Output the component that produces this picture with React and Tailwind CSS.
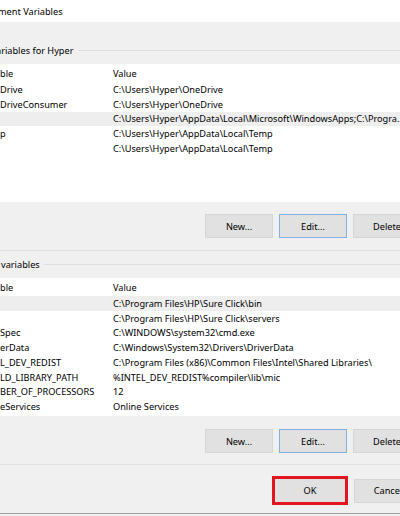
import React from "react";

const userRows = [
  { n: "Drive", v: "C:\\Users\\Hyper\\OneDrive" },
  { n: "DriveConsumer", v: "C:\\Users\\Hyper\\OneDrive" },
  { n: "", v: "C:\\Users\\Hyper\\AppData\\Local\\Microsoft\\WindowsApps;C:\\Progra...", sel: true },
  { n: "p", v: "C:\\Users\\Hyper\\AppData\\Local\\Temp" },
  { n: "", v: "C:\\Users\\Hyper\\AppData\\Local\\Temp" },
];

const sysRows = [
  { n: "", v: "C:\\Program Files\\HP\\Sure Click\\bin", sel: true },
  { n: "", v: "C:\\Program Files\\HP\\Sure Click\\servers" },
  { n: "Spec", v: "C:\\WINDOWS\\system32\\cmd.exe" },
  { n: "erData", v: "C:\\Windows\\System32\\Drivers\\DriverData" },
  { n: "L_DEV_REDIST", v: "C:\\Program Files (x86)\\Common Files\\Intel\\Shared Libraries\\" },
  { n: "LD_LIBRARY_PATH", v: "%INTEL_DEV_REDIST%compiler\\lib\\mic" },
  { n: "BER_OF_PROCESSORS", v: "12" },
  { n: "eServices", v: "Online Services" },
];

function List({ rows }) {
  return (
    <div className="h-[138px] bg-white overflow-hidden shrink-0">
      <div className="h-[18px] flex items-center whitespace-nowrap">
        <div className="w-[113px] shrink-0">ble</div>
        <div>Value</div>
      </div>
      {rows.map((r, i) => (
        <div
          key={i}
          className={
            "h-[14.75px] flex items-center whitespace-nowrap " +
            (r.sel ? "bg-[#eeeeee]" : "")
          }
        >
          <div className="w-[113px] shrink-0 overflow-hidden">{r.n}</div>
          <div className="overflow-hidden">{r.v}</div>
        </div>
      ))}
    </div>
  );
}

function Btn({ children, focus }) {
  return (
    <div
      className={
        "w-[68px] h-[24px] shrink-0 flex items-center justify-center bg-[#e1e1e1] border " +
        (focus ? "border-[#7fb0e0]" : "border-[#d6d6d6]")
      }
    >
      {children}
    </div>
  );
}

function Buttons() {
  return (
    <div className="flex pl-[205px] gap-[7px] whitespace-nowrap shrink-0">
      <Btn>New...</Btn>
      <div className="-ml-[1px] shrink-0">
        <Btn focus>Edit...</Btn>
      </div>
      <div className="-ml-[1px] shrink-0">
        <Btn>Delete</Btn>
      </div>
    </div>
  );
}

export default function App() {
  return (
    <div className="w-[400px] h-[516px] overflow-hidden bg-[#f0f0f0] text-[9.2px] leading-[15px] text-black font-['Segoe_UI','Noto_Sans',sans-serif] flex flex-col">
      <div className="h-[22px] bg-white flex items-center shrink-0 whitespace-nowrap">
        <span className="-ml-[2px]">ment Variables</span>
      </div>
      <div className="h-[42px] flex items-end pb-[6px] shrink-0 whitespace-nowrap">
        <span className="-ml-[4px]">ariables for Hyper</span>
        <div className="flex-1 h-[1px] bg-[#dedede] ml-[4px] mb-[7px]" />
      </div>
      <List rows={userRows} />
      <div className="h-[12px] shrink-0" />
      <Buttons />
      <div className="h-[13px] shrink-0 border-b border-[#e2e2e2]" />
      <div className="h-[27px] flex items-start pt-[6px] shrink-0 whitespace-nowrap">
        <span className="ml-[1px]">variables</span>
        <div className="flex-1 h-[1px] bg-[#dedede] ml-[4px] mt-[7px]" />
      </div>
      <List rows={sysRows} />
      <div className="h-[13px] shrink-0" />
      <Buttons />
      <div className="h-[12px] shrink-0 border-b border-[#e2e2e2]" />
      <div className="h-[11px] shrink-0" />
      <div className="flex pl-[272px] gap-[6px] items-center shrink-0 whitespace-nowrap">
        <div className="w-[76px] h-[29px] shrink-0 border-[3px] border-[#e3151f] flex items-center justify-center bg-[#e1e1e1]">
          OK
        </div>
        <Btn>Cancel</Btn>
      </div>
      <div className="h-[8px] shrink-0" />
      <div className="h-[1px] bg-[#9d9d9d] shrink-0" />
    </div>
  );
}
